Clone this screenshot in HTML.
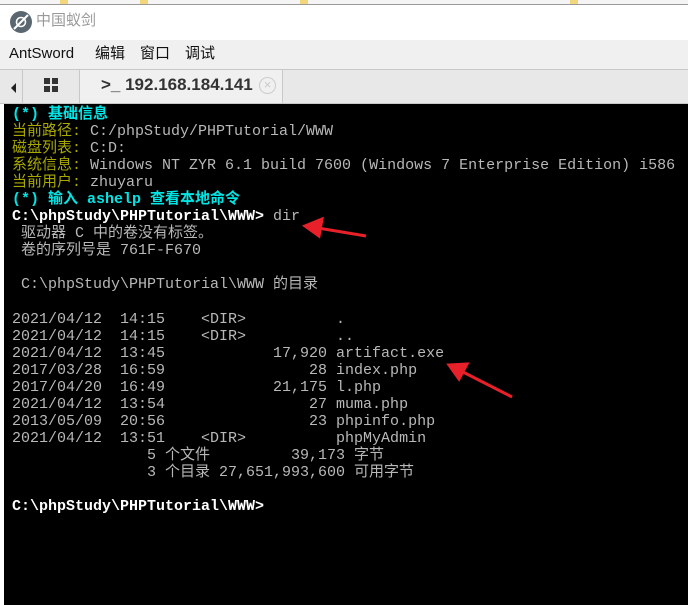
<!DOCTYPE html>
<html><head><meta charset="utf-8"><style>
*{margin:0;padding:0;box-sizing:border-box}
body{width:688px;height:605px;overflow:hidden;background:#fff;position:relative;font-family:"Liberation Sans","Noto Sans CJK SC",sans-serif}
.abs{position:absolute}
#top{left:0;top:0;width:688px;height:5px;background:#f4f4f4;border-bottom:1px solid #999}
#title{left:0;top:5px;width:688px;height:35px;background:#fff}
#menu{left:0;top:40px;width:688px;height:29px;background:#f0f0f0;font-size:15px;color:#111}
#menu span{position:absolute;top:4px;line-height:20px;height:20px}
#tabs{left:0;top:69px;width:688px;height:35px;background:#e8e8e8;border-top:1px solid #c8c8c8;border-bottom:1px solid #c8c8c8}
#term{left:4px;top:104px;width:684px;height:501px;background:#000}
pre{position:absolute;left:12px;top:106px;font-family:"Liberation Mono","Noto Sans CJK SC",monospace;font-size:15px;line-height:17.05px;color:#b8b8b8;white-space:pre}
.c{color:#00e5e5;font-weight:bold}.y{color:#a8a800}.w{color:#fff;font-weight:bold}
</style></head><body>
<div class="abs" id="top">
<div class="abs" style="left:60px;top:0;width:8px;height:4px;background:#f3d67a"></div>
<div class="abs" style="left:140px;top:0;width:8px;height:4px;background:#f3d67a"></div>
<div class="abs" style="left:300px;top:0;width:8px;height:4px;background:#f3d67a"></div>
<div class="abs" style="left:570px;top:0;width:8px;height:4px;background:#f3d67a"></div>
</div>
<div class="abs" id="title">
<svg class="abs" style="left:9px;top:5px" width="24" height="24" viewBox="0 0 24 24"><circle cx="12" cy="12" r="11" fill="#5a6770"/><path d="M5 19 L19 5" stroke="#fff" stroke-width="2"/><circle cx="12" cy="12" r="4.5" fill="none" stroke="#fff" stroke-width="1.6"/></svg>
<span class="abs" style="left:36px;top:6px;font-size:15px;color:#999;line-height:20px">中国蚁剑</span>
</div>
<div class="abs" id="menu"><span style="left:9px">AntSword</span><span style="left:95px">编辑</span><span style="left:140px">窗口</span><span style="left:185px">调试</span></div>
<div class="abs" id="tabs">
<div class="abs" style="left:4px;top:0;width:19px;height:33px;border-right:1px solid #c8c8c8"></div>
<div class="abs" style="left:11px;top:13px;width:0;height:0;border-top:5px solid transparent;border-bottom:5px solid transparent;border-right:5px solid #222"></div>
<div class="abs" style="left:23px;top:0;width:57px;height:33px;border-right:1px solid #c8c8c8"></div>
<div class="abs" style="left:44px;top:8px;width:6px;height:6px;background:#333"></div>
<div class="abs" style="left:52px;top:8px;width:6px;height:6px;background:#333"></div>
<div class="abs" style="left:44px;top:16px;width:6px;height:6px;background:#333"></div>
<div class="abs" style="left:52px;top:16px;width:6px;height:6px;background:#333"></div>
<div class="abs" style="left:80px;top:0;width:203px;height:33px;background:#f0f0f0;border-right:1px solid #c8c8c8"></div>
<span class="abs" style="left:101px;top:5px;font-size:17px;font-weight:bold;color:#333">&gt;_ 192.168.184.141</span>
<div class="abs" style="left:259px;top:7px;width:17px;height:17px;border-radius:50%;border:1.5px solid #ccc;color:#ccc;font-size:13px;line-height:14px;text-align:center">×</div>
</div>
<div class="abs" id="term"></div>
<pre><span class="c">(*) 基础信息</span>
<span class="y">当前路径:</span> C:/phpStudy/PHPTutorial/WWW
<span class="y">磁盘列表:</span> C:D:
<span class="y">系统信息:</span> Windows NT ZYR 6.1 build 7600 (Windows 7 Enterprise Edition) i586
<span class="y">当前用户:</span> zhuyaru
<span class="c">(*) 输入 ashelp 查看本地命令</span>
<span class="w">C:\phpStudy\PHPTutorial\WWW&gt;</span> dir
 驱动器 C 中的卷没有标签。
 卷的序列号是 761F-F670

 C:\phpStudy\PHPTutorial\WWW 的目录

2021/04/12  14:15    &lt;DIR&gt;          .
2021/04/12  14:15    &lt;DIR&gt;          ..
2021/04/12  13:45            17,920 artifact.exe
2017/03/28  16:59                28 index.php
2017/04/20  16:49            21,175 l.php
2021/04/12  13:54                27 muma.php
2013/05/09  20:56                23 phpinfo.php
2021/04/12  13:51    &lt;DIR&gt;          phpMyAdmin
               5 个文件         39,173 字节
               3 个目录 27,651,993,600 可用字节

<span class="w">C:\phpStudy\PHPTutorial\WWW&gt;</span></pre>
<svg class="abs" style="left:0;top:0" width="688" height="605">
<g stroke="#e8202a" stroke-width="3" fill="#e8202a">
<line x1="366" y1="236" x2="318" y2="228"/><polygon points="305,226 322,219 319,236"/>
<line x1="512" y1="397" x2="461" y2="371"/><polygon points="449,365 467,364 459,379"/>
</g></svg>
</body></html>
